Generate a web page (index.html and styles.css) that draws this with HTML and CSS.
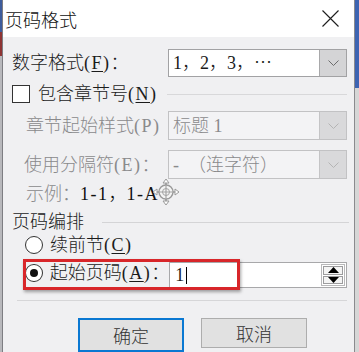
FILE: index.html
```html
<!DOCTYPE html>
<html lang="zh-CN">
<head>
  <meta charset="UTF-8">
  <meta name="viewport" content="width=device-width, initial-scale=1.0">
  <title>页码格式</title>
  <link rel="stylesheet" href="styles.css">
</head>
<body>
  <div class="screen">
    <div class="edge-left"></div>
    <div class="dialog">
      <div class="titlebar">
        <span class="title">页码格式</span>
        <svg class="close" width="17" height="17" viewBox="0 0 17 17">
          <path d="M0.5 0.5L16.5 16.5M16.5 0.5L0.5 16.5" stroke="#1e1e1e" stroke-width="1.1" fill="none"/>
        </svg>
      </div>
      <div class="body">
        <div class="row row-format">
          <span class="label">数字格式<span class="lat">(<u>F</u>)</span>：</span>
          <div class="select">
            <span class="value">1，2，3，⋯</span>
            <span class="drop">
              <svg width="11" height="6" viewBox="0 0 11 6"><path d="M0.5 0.5L5.5 5.5L10.5 0.5" stroke="#6c6c6c" fill="none"/></svg>
            </span>
          </div>
        </div>
        <div class="row row-check">
          <span class="checkbox"></span>
          <span class="label">包含章节号<span class="lat">(<u>N</u>)</span></span>
          <span class="rule"></span>
        </div>
        <div class="row row-sub">
          <span class="label muted">章节起始样式<span class="lat">(P)</span></span>
          <div class="select disabled">
            <span class="value">标题 1</span>
            <span class="drop">
              <svg width="11" height="6" viewBox="0 0 11 6"><path d="M0.5 0.5L5.5 5.5L10.5 0.5" stroke="#b4b4b4" fill="none"/></svg>
            </span>
          </div>
        </div>
        <div class="row row-sub row-sep">
          <span class="label muted">使用分隔符<span class="lat">(E)</span>：</span>
          <div class="select disabled">
            <span class="value">-&nbsp;&nbsp;（连字符）</span>
            <span class="drop">
              <svg width="11" height="6" viewBox="0 0 11 6"><path d="M0.5 0.5L5.5 5.5L10.5 0.5" stroke="#b4b4b4" fill="none"/></svg>
            </span>
          </div>
        </div>
        <div class="row row-example">
          <span class="label muted">示例：</span>
          <span class="label sample"><span class="lat">1-1</span>，<span class="lat">1-A</span></span>
          <svg class="move-cursor" width="28" height="28" viewBox="0 0 28 28">
            <path d="M14 1L17 5H11Z M14 27L17 23H11Z M1 14L5 11V17Z M27 14L23 11V17Z" fill="#fff" stroke="#9a9a9a" stroke-width="1"/>
            <path d="M14 5V23M5 14H23" stroke="#9a9a9a" stroke-width="1.6"/>
            <circle cx="14" cy="14" r="7" fill="#f4f4f4" stroke="#9a9a9a" stroke-width="1.4"/>
            <path d="M14 8V20M8 14H20" stroke="#a4a4a4" stroke-width="1.2"/>
            <circle cx="14" cy="14" r="3.5" fill="none" stroke="#a4a4a4" stroke-width="1"/>
          </svg>
        </div>
        <div class="row row-group">
          <span class="label">页码编排</span>
          <span class="group-line"></span>
        </div>
        <div class="row row-radio">
          <span class="radio"></span>
          <span class="label">续前节<span class="lat">(<u>C</u>)</span></span>
        </div>
        <div class="row row-radio row-start">
          <span class="radio checked"></span>
          <span class="label">起始页码<span class="lat">(<u>A</u>)</span>：</span>
          <div class="spin-input">
            <span class="value">1</span><span class="caret"></span>
            <div class="spin">
              <span class="spin-btn"><svg width="11" height="6" viewBox="0 0 11 6"><path d="M5.5 0L11 6H0Z" fill="#000"/></svg></span>
              <span class="spin-btn"><svg width="11" height="6" viewBox="0 0 11 6"><path d="M5.5 6L11 0H0Z" fill="#000"/></svg></span>
            </div>
          </div>
          <span class="highlight"></span>
        </div>
        <div class="divider"></div>
        <div class="buttons">
          <button class="btn btn-default">确定</button>
          <button class="btn">取消</button>
        </div>
      </div>
    </div>
    <div class="edge-right"></div>
  </div>
</body>
</html>
```

FILE: styles.css
```css
* {
  box-sizing: border-box;
}
body {
  margin: 0;
  width: 359px;
  height: 352px;
  overflow: hidden;
  font-family: "Liberation Serif", "Noto Sans CJK SC", sans-serif;
  font-size: 18px;
  font-weight: 300;
  color: #1b1b1b;
  background: #dcdcdc;
}
.screen {
  display: flex;
  height: 352px;
}
.edge-left {
  width: 2px;
  background: linear-gradient(#3e5c9c 0 32px, #8e3434 32px 56px, #b8b8bc 56px);
}
.edge-right {
  width: 4px;
  background: linear-gradient(#3d64b2 0 88px, #d6d6d6 88px);
}
.dialog {
  width: 353px;
  border-left: 1px solid #7d7d82;
  border-right: 1px solid #8a8a8e;
  background: #f0f0f2;
  display: flex;
  flex-direction: column;
}
.titlebar {
  height: 38px;
  background: #fff;
  display: flex;
  align-items: center;
  justify-content: space-between;
  padding: 0 15px 0 2px;
}
.title {
  font-family: "Noto Sans CJK SC", sans-serif;
  font-size: 18px;
  line-height: 20px;
  color: #111;
}
.body {
  padding: 0 7px 0 9px;
}
.row {
  display: flex;
  align-items: center;
  position: relative;
}
.label {
  line-height: 20px;
  white-space: nowrap;
}
.label u {
  text-underline-offset: 2px;
}
/* half-width latin, a bit wider like the system font */
.lat {
  letter-spacing: 1.5px;
}
.muted {
  color: #8a8a8c;
}
.row-format {
  margin-top: 12px;
  height: 28px;
}
.select {
  margin-left: auto;
  width: 179px;
  height: 100%;
  background: #fff;
  border: 1px solid #a2a2a4;
  display: flex;
  align-items: center;
}
.select .value {
  flex: 1;
  padding-left: 4px;
  line-height: 20px;
  white-space: nowrap;
}
.drop {
  width: 27px;
  height: 100%;
  background: #d4d4d6;
  border-left: 1px solid #a8a8aa;
  display: flex;
  align-items: center;
  justify-content: center;
}
.select.disabled {
  background: #f3f3f5;
  border-color: #c2c2c4;
  color: #8a8a8c;
}
.select.disabled .drop {
  background: #d9d9db;
  border-left-color: #c4c4c6;
}
.row-check {
  margin-top: 8px;
  height: 18px;
}
.checkbox {
  width: 18px;
  height: 18px;
  border: 1px solid #333;
  background: #fff;
  margin-right: 8px;
}
.rule {
  margin-left: auto;
  width: 180px;
  border-top: 1px solid #d8d8da;
}
.row-sub {
  margin-top: 8px;
  height: 29px;
  padding-left: 14px;
}
.row-sep {
  margin-top: 10px;
  padding-left: 12px;
}
.row-example {
  margin-top: 5px;
  height: 20px;
  padding-left: 14px;
}
.sample {
  color: #111;
}
.move-cursor {
  position: absolute;
  left: 140px;
  top: -6px;
}
.row-group {
  margin-top: 8px;
  height: 20px;
}
.group-line {
  flex: 1;
  margin-left: 18px;
  margin-right: -2px;
  border-top: 1px solid #d4d4d6;
}
.row-radio {
  margin-top: 3px;
  height: 20px;
  padding-left: 13px;
}
.radio {
  width: 18px;
  height: 18px;
  border: 1px solid #333;
  border-radius: 50%;
  background: #fff;
  margin-right: 7px;
  display: flex;
  align-items: center;
  justify-content: center;
}
.radio.checked::after {
  content: "";
  width: 8px;
  height: 8px;
  border-radius: 50%;
  background: #111;
}
.row-start {
  margin-top: 4px;
  height: 31px;
}
.row-start .radio {
  margin-top: -4px;
}
.row-start .label {
  margin-top: -4px;
}
.spin-input {
  margin-left: auto;
  width: 181px;
  height: 26px;
  margin-top: 1px;
  background: #fff;
  border: 1px solid #a8a8aa;
  display: flex;
  align-items: center;
  padding-left: 5px;
}
.spin-input .value {
  line-height: 20px;
}
.caret {
  width: 1px;
  height: 17px;
  background: #000;
  margin-left: 2px;
}
.spin {
  margin-left: auto;
  margin-right: 1px;
  width: 24px;
  height: 22px;
  border: 1px solid #b8b8ba;
  display: flex;
  flex-direction: column;
  gap: 1px;
  padding: 1px;
}
.spin-btn {
  flex: 1;
  border: 1px solid #9c9c9e;
  background: #f4f4f4;
  display: flex;
  align-items: center;
  justify-content: center;
}
.highlight {
  position: absolute;
  left: 11px;
  top: 0;
  width: 217px;
  height: 31px;
  border: 3px solid #d8262a;
  box-shadow: 1px 2px 3px rgba(0, 0, 0, 0.35);
}
.divider {
  margin: 10px 0 0 5px;
  border-top: 1px solid #d6d6d8;
}
.buttons {
  margin-top: 17px;
  display: flex;
  gap: 17px;
  padding-left: 66px;
}
.btn {
  width: 106px;
  height: 30px;
  font-family: "Noto Sans CJK SC", sans-serif;
  font-size: 18px;
  font-weight: 300;
  line-height: 20px;
  color: #333;
  background: #e1e1e1;
  border: 1px solid #adadad;
  padding: 0;
}
.btn-default {
  height: 34px;
  border: 2px solid #0a78d2;
}
```
